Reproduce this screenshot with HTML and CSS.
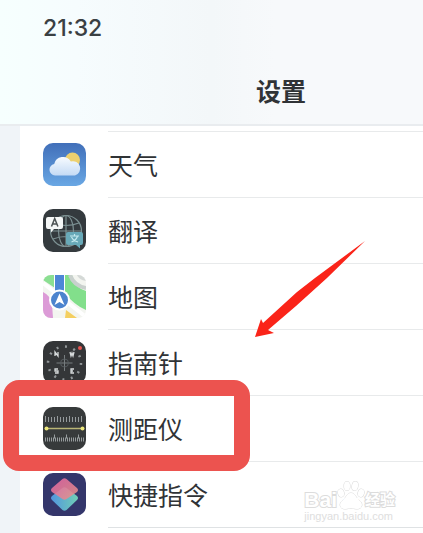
FILE: index.html
```html
<!DOCTYPE html>
<html lang="zh-CN">
<head>
    <meta charset="UTF-8">
    <meta name="viewport" content="width=device-width, initial-scale=1.0">
    <title>设置</title>
    <link rel="stylesheet" href="styles.css">
</head>
<body>
    <header class="header">
        <time class="clock">21:32</time>
        <h1>设置</h1>
    </header>

    <main class="content">
        <ul class="apps">
            <li>
                <svg class="icon" viewBox="0 0 43 43">
                    <defs>
                        <linearGradient id="sky" x1="0" y1="0" x2="0" y2="1">
                            <stop offset="0" stop-color="#416fb9"/>
                            <stop offset="1" stop-color="#69a7e4"/>
                        </linearGradient>
                        <linearGradient id="cloud" x1="0" y1="0" x2="0" y2="1">
                            <stop offset="0" stop-color="#f7fbff"/>
                            <stop offset="1" stop-color="#c4daf5"/>
                        </linearGradient>
                    </defs>
                    <rect width="43" height="43" rx="10" fill="url(#sky)"/>
                    <circle cx="29.500" cy="17" r="7.500" fill="#ecd06f"/>
                    <path d="M12 32.500a5.800 5.800 0 0 1-.8-11.500 9 9 0 0 1 16.600-2.500 7.200 7.200 0 0 1 4.200 14z" fill="url(#cloud)"/>
                </svg>
                <span>天气</span>
            </li>
            <li>
                <svg class="icon" viewBox="0 0 43 43">
                    <rect width="43" height="43" rx="10" fill="#343a3e"/>
                    <g fill="none" stroke="#7c9092" stroke-width="1.200">
                        <circle cx="23" cy="22" r="15.500"/>
                        <ellipse cx="23" cy="22" rx="7.500" ry="15.500"/>
                        <path d="M23 6.500v31M7.500 22h31M10 14q13 5 26 0M10 30q13-5 26 0"/>
                    </g>
                    <path d="M5 8h13a2 2 0 0 1 2 2v8a2 2 0 0 1-2 2h-7l-3 3.500V20H5a2 2 0 0 1-2-2v-8a2 2 0 0 1 2-2z" fill="#f5f7f7"/>
                    <path d="M8.500 17.500l3.200-8 3.200 8M9.700 15h4" fill="none" stroke="#4b5153" stroke-width="1.500"/>
                    <path d="M25 23h13a2 2 0 0 1 2 2v9a2 2 0 0 1-2 2h-1v3.500L33 36h-8a2 2 0 0 1-2-2v-9a2 2 0 0 1 2-2z" fill="#68a9b8"/>
                    <path d="M27 27h9M31.500 25v2M28.500 33q5-2 6-6M28.500 28q2 4 6.500 5" fill="none" stroke="#c4e9ee" stroke-width="1.200"/>
                </svg>
                <span>翻译</span>
            </li>
            <li>
                <svg class="icon" viewBox="0 0 43 43">
                    <defs>
                        <clipPath id="mapShape"><rect width="43" height="43" rx="8"/></clipPath>
                    </defs>
                    <g clip-path="url(#mapShape)">
                        <rect width="43" height="43" fill="#f3f5f0"/>
                        <path d="M0 0h12v13L0 5z" fill="#8bdf92"/>
                        <path d="M22 0h7q3 13 14 16v19Q31 30 22 18z" fill="#82df8b"/>
                        <path d="M27 0q4 11 16 13" fill="none" stroke="#c9d0cd" stroke-width="4"/>
                        <path d="M34 0q2 5 9 6V0z" fill="#d5d9d7"/>
                        <path d="M0 17q8 4 9 12l1 14H0z" fill="#dc9bd7"/>
                        <path d="M0 8l43 34" stroke="#fff" stroke-width="4"/>
                        <path d="M23 35l11 8H22z" fill="#f4cf60"/>
                        <path d="M11 0h11v20H11z" fill="#fff"/>
                        <path d="M12 0h9v20h-9z" fill="#4d87d6"/>
                        <circle cx="16.500" cy="25" r="10.500" fill="#fff"/>
                        <circle cx="16.500" cy="25" r="8.500" fill="#4c84ce"/>
                        <path d="M16.500 18.500l5 11.500-5-3-5 3z" fill="#fff"/>
                    </g>
                </svg>
                <span>地图</span>
            </li>
            <li>
                <svg class="icon" viewBox="0 0 43 43">
                    <rect width="43" height="43" rx="10" fill="#343638"/>
                    <circle cx="21.500" cy="22" r="16.500" fill="none" stroke="#929799" stroke-width="2.500" stroke-dasharray="2 6.640"/>
                    <path d="M21.500 14v16M13.500 22h16" stroke="#777d7f"/>
                    <circle cx="21.500" cy="22" r="4" fill="none" stroke="#565c5f"/>
                    <g fill="none" stroke="#d7dbdc" stroke-width="1.300">
                        <path d="M12 15v-4l3 4v-4M27 11l1 4 1-3 1 3 1-4M15 28h-3v2h3v2h-3M31 28h-3v4h3M28 30h2"/>
                    </g>
                    <circle cx="37" cy="7" r="2" fill="#e65450"/>
                </svg>
                <span>指南针</span>
            </li>
            <li class="marked">
                <svg class="icon" viewBox="0 0 43 43">
                    <rect width="43" height="43" rx="10" fill="#373a3b"/>
                    <g stroke="#969b9d" fill="none">
                        <path d="M2 12.500h39" stroke-width="5" stroke-dasharray="1 2"/>
                        <path d="M2 11h39" stroke-width="4" stroke-dasharray="1 11"/>
                        <path d="M2 32.500h39" stroke-width="4" stroke-dasharray="1 1"/>
                        <path d="M11 29.500h30" stroke-width="4" stroke-dasharray="1 11"/>
                    </g>
                    <path d="M3 21.500h37" stroke="#b8b475" stroke-width="1.300"/>
                    <circle cx="3.500" cy="21.500" r="2" fill="#ece77b"/>
                    <circle cx="39.500" cy="21.500" r="2" fill="#ece77b"/>
                </svg>
                <span>测距仪</span>
            </li>
            <li>
                <svg class="icon" viewBox="0 0 43 43">
                    <defs>
                        <linearGradient id="pink" x1="0" y1="0" x2="1" y2="1">
                            <stop offset="0" stop-color="#e864a4"/>
                            <stop offset="1" stop-color="#e59588"/>
                        </linearGradient>
                        <linearGradient id="teal" x1="0" y1="0" x2="1" y2="0">
                            <stop offset="0" stop-color="#5296df"/>
                            <stop offset="1" stop-color="#70cfb5"/>
                        </linearGradient>
                    </defs>
                    <rect width="43" height="43" rx="10" fill="#34366b"/>
                    <path d="M9 23l10.500-8q2-1.500 4 0L34 23q2 2 0 4l-10.500 10q-2 1.500-4 0L9 27q-2-2 0-4z" fill="url(#teal)"/>
                    <path d="M9 15l10.500-9q2-1.500 4 0L34 15q2 2 0 4l-10.500 7q-2 1.500-4 0L9 19q-2-2 0-4z" fill="url(#pink)" opacity=".88"/>
                </svg>
                <span>快捷指令</span>
            </li>
            <li class="next"></li>
        </ul>
    </main>

    <svg class="arrow" viewBox="0 0 112 97" aria-hidden="true">
        <path d="M110 0L60 37 42 51 8 82 6 78 0 96 19 92 13 89 41 65 72 37z" fill="#fa2419"/>
    </svg>

    <div class="watermark">
        <div class="brand">
            <span>Bai</span>
            <svg class="paw" viewBox="0 0 28 30">
                <g fill="#fff" stroke="#d9d9d9">
                    <ellipse cx="4" cy="13" rx="3" ry="4" transform="rotate(-15 4 13)"/>
                    <ellipse cx="10" cy="6" rx="3" ry="4.500"/>
                    <ellipse cx="18" cy="6" rx="3" ry="4.500" transform="rotate(10 18 6)"/>
                    <ellipse cx="24" cy="13" rx="3" ry="4" transform="rotate(15 24 13)"/>
                    <path d="M14 13c4 0 5 5 8 7 5 4 3 9-2 9-3 0-4-1-6-1s-3 1-6 1c-5 0-7-5-2-9 3-2 4-7 8-7z"/>
                </g>
                <text x="14" y="26" text-anchor="middle">du</text>
            </svg>
            <span class="cn">经验</span>
        </div>
        <div class="site">jingyan.baidu.com</div>
    </div>
</body>
</html>
```
FILE: styles.css
```css
*,
*::after {
    box-sizing: border-box;
}
body {
    margin: 0;
    height: 100vh;
    display: flex;
    flex-direction: column;
    position: relative;
    overflow: hidden;
    background: #f0f4f8;
    color: #303336;
    font-family: Inter, "Noto Sans CJK SC", sans-serif;
}
.header {
    flex: none;
    padding: 14px 0 14px 43px;
    border-bottom: 2px solid #e9ecef;
    background: linear-gradient(90deg, #f6fffe 0%, #f6fcfe 18%, #f3f7f9 50%, #f7f9fb 65%, #f7f9fb 100%);
}
.clock {
    display: block;
    font-size: 23px;
    font-weight: 500;
    line-height: 28px;
    color: #3a4043;
}
h1 {
    margin: 32px 0 0 213px;
    font-size: 25px;
    font-weight: 700;
    line-height: 36px;
}
.content {
    flex: 1;
    min-height: 0;
    margin-left: 20px;
    padding-top: 5px;
    background: #fff;
}
.apps {
    list-style: none;
    margin: 0;
    padding: 0;
}
.apps li {
    display: flex;
    align-items: center;
    gap: 22px;
    height: 66px;
    padding-left: 23px;
}
.apps span {
    flex: 1;
    height: 66px;
    border-top: 1px solid #e8eaeb;
    font-size: 25px;
    line-height: 68px;
}
.apps .next {
    height: 1px;
    margin-left: 88px;
    padding: 0;
    background: #dfe2e4;
}
.icon {
    flex: none;
    width: 43px;
    height: 43px;
}
/* red frame around the row */
.marked {
    position: relative;
}
.marked::after {
    content: "";
    position: absolute;
    top: -15px;
    left: -17px;
    width: 247px;
    height: 91px;
    border: 16px solid #ec534f;
    border-radius: 16px;
}
.arrow {
    position: absolute;
    top: 241px;
    left: 255px;
    width: 112px;
    height: 97px;
}
.watermark {
    position: absolute;
    right: 28px;
    bottom: 10px;
    color: #fff;
    font-family: "Liberation Sans", "Noto Sans CJK SC", sans-serif;
}
.brand {
    display: flex;
    align-items: flex-end;
    height: 30px;
    font-size: 21px;
    font-weight: 700;
    line-height: 21px;
    -webkit-text-stroke: 2px #dcdcdc;
    paint-order: stroke fill;
}
.brand .cn {
    font-size: 15px;
}
.paw {
    width: 28px;
    height: 30px;
}
.paw g {
    stroke-width: 1px;
}
.paw text {
    fill: #fff;
    font-size: 14px;
}
.site {
    color: #dedede;
    font-size: 11px;
    line-height: 13px;
}
```
